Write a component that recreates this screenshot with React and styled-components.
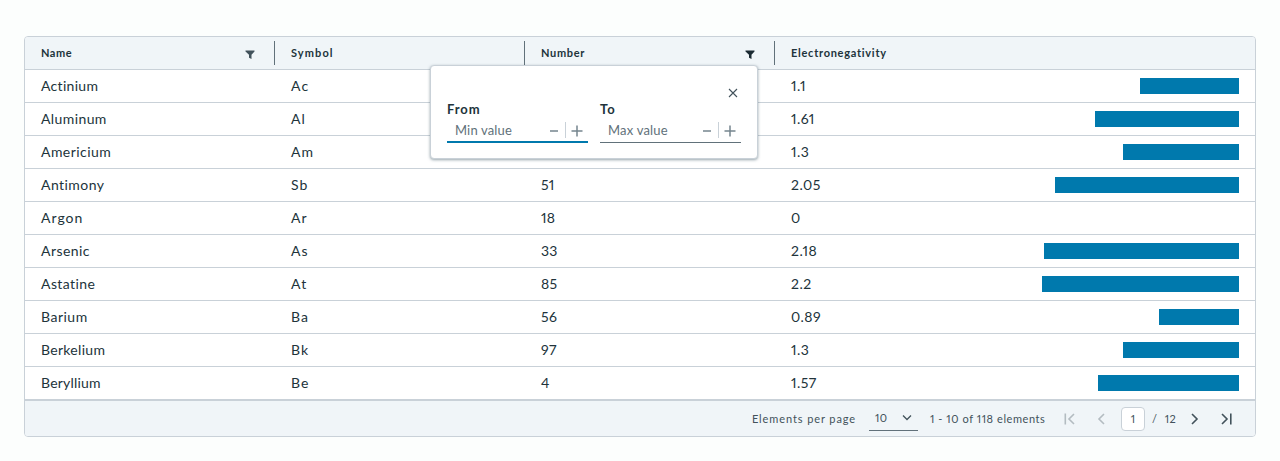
import React from "react";
import styled, { createGlobalStyle, css } from "styled-components";

const GlobalStyle = createGlobalStyle`
  * { box-sizing: border-box; }
  html, body { margin: 0; }
  body {
    min-height: 461px;
    background: #fcfefd;
    color: #21333b;
    font-family: Lato, "Open Sans", sans-serif;
    font-size: 14px;
    font-variant-numeric: proportional-nums;
  }
`;

const Page = styled.main`
  padding: 36px 24px 24px;
`;

const DataGrid = styled.section`
  display: flex;
  flex-direction: column;
  width: 1232px;
  height: 401px;
  border: 1px solid #c9d1d8;
  border-radius: 4px;
  background: #fff;
  overflow: hidden;
`;

const columns = css`
  display: grid;
  grid-template-columns: 250px 250px 250px 1fr;
`;

const HeaderRow = styled.div`
  ${columns}
  height: 33px;
  flex: none;
  background: #f0f5f8;
  border-bottom: 1px solid #c9d1d8;
`;

const HeaderCell = styled.div`
  position: relative;
  display: flex;
  align-items: center;
  justify-content: space-between;
  padding: 0 19px 0 16px;
  font-size: 11px;
  font-weight: 700;
  line-height: 32px;

  &:not(:last-child)::after {
    content: "";
    position: absolute;
    top: 4px;
    right: 0;
    width: 1px;
    height: 24px;
    background: #61717a;
  }
`;

const Row = styled.div`
  ${columns}
  height: 33px;
  flex: none;
  border-bottom: 1px solid #c9d1d8;
`;

const Cell = styled.div`
  position: relative;
  padding: 0 16px;
  line-height: 32px;
`;

const ValueCell = styled(Cell)`
  display: grid;
  align-items: center;

  & > * { grid-area: 1 / 1; }
`;

const Bar = styled.div`
  justify-self: end;
  height: 16px;
  background: #0079ad;
`;

const Label = styled.span`
  letter-spacing: ${(p) => p.$spacing ?? 0.3}px;
  white-space: nowrap;
`;

const FilterIcon = styled.svg`
  display: block;
  margin-top: 3px;
  width: 11px;
  height: 9px;
  fill: ${(p) => (p.$active ? "#1b2a32" : "#42525b")};
`;

const Footer = styled.footer`
  display: flex;
  align-items: center;
  justify-content: flex-end;
  height: 37px;
  flex: none;
  padding-right: 13px;
  border-top: 1px solid #c9d1d8;
  background: #f0f5f8;
  color: #42525b;
  font-size: 11px;
  line-height: 16px;
`;

const PageSize = styled.div`
  display: flex;
  justify-content: space-between;
  width: 49px;
  height: 24px;
  margin: 0 12px 0 13px;
  padding: 3px 6px 0;
  border-bottom: 1px solid #61717a;
`;

const PageRange = styled(Label)`
  width: 115px;
  margin-right: 8px;
`;

const Chevron = styled.svg`
  width: 10px;
  height: 16px;
  fill: none;
  stroke: #42525b;
  stroke-width: 1.3;
`;

const PagerButton = styled.button`
  display: flex;
  align-items: center;
  justify-content: center;
  width: 32px;
  height: 24px;
  padding: 0;
  border: 0;
  background: none;
  color: ${(p) => (p.disabled ? "#b3bcc1" : "#42525b")};

  svg {
    width: 14px;
    height: 14px;
    fill: none;
    stroke: currentColor;
    stroke-width: 1.6;
  }
`;

const PageNumber = styled.span`
  width: 24px;
  height: 24px;
  margin: 0 7px 0 4px;
  border: 1px solid #c9d1d8;
  border-radius: 4px;
  background: #fff;
  line-height: 22px;
  text-align: center;
`;

const PageCount = styled.span`
  display: flex;
  justify-content: space-between;
  width: 24px;
  margin-right: 2px;
`;

const FilterPopup = styled.div`
  position: absolute;
  left: 430px;
  top: 65px;
  width: 328px;
  height: 94px;
  padding: 19px 16px 0;
  border: 1px solid #c9d1d8;
  border-radius: 4px;
  background: #fff;
  box-shadow: 0 1px 3px rgba(80, 105, 116, 0.6);
`;

const CloseRow = styled.div`
  display: flex;
  justify-content: flex-end;
  height: 16px;
  padding: 3px 3px 0 0;

  svg {
    width: 10px;
    height: 10px;
    fill: none;
    stroke: #42525b;
    stroke-width: 1.1;
  }
`;

const Fields = styled.div`
  display: flex;
  gap: 12px;
`;

const Field = styled.div`
  width: 141px;
`;

const FieldLabel = styled.div`
  font-size: 13px;
  font-weight: 700;
  line-height: 16px;
`;

const NumberInput = styled.div`
  display: flex;
  height: 26px;
  padding-left: 8px;
  border-bottom: ${(p) => (p.$focused ? "2px solid #0079ad" : "1px solid #61717a")};
  color: #61717a;
  font-size: 13px;
  line-height: 26px;
`;

const Stepper = styled.svg`
  width: 36px;
  height: 16px;
  margin: 5px 4px 0 auto;
  fill: none;
`;

const elements = [
  { name: "Actinium", symbol: "Ac", number: "89", value: "1.1", tracking: 0.3 },
  { name: "Aluminum", symbol: "Al", number: "13", value: "1.61", tracking: 0.4 },
  { name: "Americium", symbol: "Am", number: "95", value: "1.3", tracking: 0.45 },
  { name: "Antimony", symbol: "Sb", number: "51", value: "2.05", tracking: 0.45 },
  { name: "Argon", symbol: "Ar", number: "18", value: "0", tracking: 1 },
  { name: "Arsenic", symbol: "As", number: "33", value: "2.18", tracking: 0.45 },
  { name: "Astatine", symbol: "At", number: "85", value: "2.2", tracking: 0.4 },
  { name: "Barium", symbol: "Ba", number: "56", value: "0.89", tracking: 0.5 },
  { name: "Berkelium", symbol: "Bk", number: "97", value: "1.3", tracking: 0.3 },
  { name: "Beryllium", symbol: "Be", number: "4", value: "1.57", tracking: 0.2 },
];

const Funnel = ({ active }) => (
  <FilterIcon viewBox="0 0 11 9" $active={active}>
    <path d="M0.5 0.5H9.5V1.5L6.5 4.7V9L4 7.8V4.7L0.5 1.5Z" />
  </FilterIcon>
);

const RangeField = ({ label, placeholder, tracking, focused }) => (
  <Field>
    <FieldLabel><Label $spacing={0.9}>{label}</Label></FieldLabel>
    <NumberInput $focused={focused}>
      <Label $spacing={tracking}>{placeholder}</Label>
      <Stepper viewBox="0 0 36 16">
        <path d="M2 9H10" stroke="#75858e" strokeWidth="1.5" />
        <path d="M17.5 0V16" stroke="#c9d1d8" />
        <path d="M23.5 9H34.5M29 3.5V14.5" stroke="#75858e" strokeWidth="1.5" />
      </Stepper>
    </NumberInput>
  </Field>
);

export default function App() {
  return (
    <Page>
      <GlobalStyle />
      <DataGrid>
        <HeaderRow>
          <HeaderCell><Label $spacing={0.5}>Name</Label><Funnel /></HeaderCell>
          <HeaderCell><Label $spacing={1.1}>Symbol</Label></HeaderCell>
          <HeaderCell><Label $spacing={0.65}>Number</Label><Funnel active /></HeaderCell>
          <HeaderCell><Label $spacing={0.73}>Electronegativity</Label></HeaderCell>
        </HeaderRow>
        {elements.map(({ name, symbol, number, value, tracking }) => (
          <Row key={name}>
            <Cell><Label $spacing={tracking}>{name}</Label></Cell>
            <Cell><Label $spacing={1.1}>{symbol}</Label></Cell>
            <Cell><Label>{number}</Label></Cell>
            <ValueCell>
              <Label $spacing={0.45}>{value}</Label>
              <Bar style={{ width: `${Number(value) * 20}%` }} />
            </ValueCell>
          </Row>
        ))}
        <Footer>
          <Label $spacing={0.9}>Elements per page</Label>
          <PageSize>
            <Label $spacing={0.5}>10</Label>
            <Chevron viewBox="0 0 10 16"><path d="M1 5.5L5 9.5L9 5.5" /></Chevron>
          </PageSize>
          <PageRange $spacing={0.57}>1 - 10 of 118 elements</PageRange>
          <PagerButton disabled><svg viewBox="0 0 14 14"><path d="M3.3 1.5V12.5M12 2L7 7L12 12" /></svg></PagerButton>
          <PagerButton disabled><svg viewBox="0 0 14 14"><path d="M10 2L5 7L10 12" /></svg></PagerButton>
          <PageNumber>1</PageNumber>
          <PageCount><span>/</span><Label>12</Label></PageCount>
          <PagerButton><svg viewBox="0 0 14 14"><path d="M5 2L10 7L5 12" /></svg></PagerButton>
          <PagerButton><svg viewBox="0 0 14 14"><path d="M3 2L8 7L3 12M11.8 1.5V12.5" /></svg></PagerButton>
        </Footer>
      </DataGrid>
      <FilterPopup>
        <CloseRow><svg viewBox="0 0 10 10"><path d="M1 1L9 9M9 1L1 9" /></svg></CloseRow>
        <Fields>
          <RangeField label="From" placeholder="Min value" tracking={0.15} focused />
          <RangeField label="To" placeholder="Max value" tracking={0.2} />
        </Fields>
      </FilterPopup>
    </Page>
  );
}
